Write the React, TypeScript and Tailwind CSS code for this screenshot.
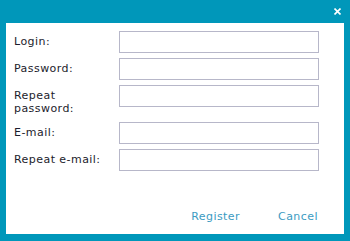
import React from 'react';

const fields = [
  { label: 'Login:', type: 'text' },
  { label: 'Password:', type: 'password' },
  { label: 'Repeat password:', type: 'password' },
  { label: 'E-mail:', type: 'text' },
  { label: 'Repeat e-mail:', type: 'text' },
];

export default function App() {
  return (
    <div
      className="w-[350px] h-[241px] bg-[#0097ba] flex flex-col px-[6px] pb-[7px]"
      style={{ fontFamily: '"DejaVu Sans", Verdana, sans-serif' }}
    >
      <div className="h-[23px] flex items-start justify-end pt-[8px] pr-[3px]">
        <svg width="7" height="7" viewBox="0 0 7 7" className="block">
          <path d="M0.5 0.5 L6.5 6.5 M6.5 0.5 L0.5 6.5" stroke="#ffffff" strokeWidth="1.6" />
        </svg>
      </div>
      <div className="flex-1 bg-white flex flex-col pt-[8px] pl-[8px]">
        <div className="flex flex-col gap-[5px]">
          {fields.map((f, i) => (
            <div key={i} className="flex items-start">
              <label className="w-[98px] mr-[7px] pt-[4px] pb-[2px] text-[11px] leading-[13px] tracking-[0.45px] text-[#1c1c2c]">
                {f.label}
              </label>
              <input
                type={f.type}
                className="w-[200px] h-[22px] border border-[#b7b7c9] bg-white outline-none"
              />
            </div>
          ))}
        </div>
        <div className="flex justify-end gap-[38px] pr-[26px] mt-[39px] text-[11px] leading-[13px] tracking-[0.45px] text-[#3b9bc2]">
          <button type="button">Register</button>
          <button type="button">Cancel</button>
        </div>
      </div>
    </div>
  );
}
